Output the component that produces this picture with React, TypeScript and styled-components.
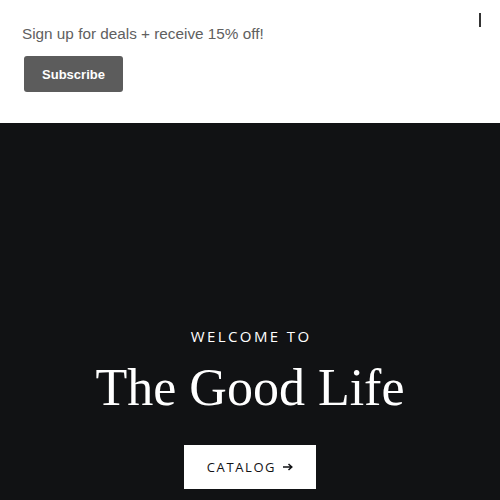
import React from "react";
import styled, { createGlobalStyle } from "styled-components";

const Global = createGlobalStyle`
  html, body { margin: 0; padding: 0; background: #111214; }
  #root { width: 500px; height: 500px; overflow: hidden; }
`;

const Page = styled.div`
  width: 500px;
  height: 500px;
  display: flex;
  flex-direction: column;
`;

const Banner = styled.div`
  position: relative;
  background: #ffffff;
  height: 123px;
  box-sizing: border-box;
  padding: 24px 22px 0;
  display: flex;
  flex-direction: column;
  align-items: flex-start;
`;

const BannerText = styled.p`
  margin: 0;
  font-family: "Liberation Sans", Arial, sans-serif;
  font-size: 15.3px;
  line-height: 20px;
  color: #606060;
`;

const SubscribeButton = styled.button`
  margin: 12px 0 0 2px;
  width: 99px;
  height: 36px;
  border: none;
  border-radius: 3px;
  background: #5c5c5c;
  color: #ffffff;
  font-family: "Liberation Sans", Arial, sans-serif;
  font-weight: 700;
  font-size: 13px;
  cursor: pointer;
`;

const CloseMark = styled.span`
  position: absolute;
  top: 13px;
  left: 479px;
  width: 2px;
  height: 14px;
  background: #333333;
`;

const Hero = styled.section`
  flex: 1;
  background: #111214;
  display: flex;
  flex-direction: column;
  align-items: center;
  justify-content: flex-end;
  padding-bottom: 11px;
`;

const Eyebrow = styled.div`
  font-family: "Open Sans", "Liberation Sans", sans-serif;
  font-size: 15px;
  font-weight: 500;
  letter-spacing: 2.4px;
  color: #ffffff;
  line-height: 20px;
  margin-right: -2.4px;
`;

const Title = styled.h1`
  margin: 12px 0 0;
  font-family: "Liberation Serif", "Times New Roman", serif;
  font-weight: 400;
  font-size: 52px;
  line-height: 60px;
  color: #ffffff;
`;

const CatalogButton = styled.a`
  margin-top: 27px;
  width: 132px;
  height: 44px;
  background: #ffffff;
  color: #111214;
  display: flex;
  align-items: center;
  justify-content: center;
  gap: 7px;
  font-family: "Open Sans", "Liberation Sans", sans-serif;
  font-size: 13px;
  font-weight: 500;
  letter-spacing: 1.6px;
  text-decoration: none;
`;

const Arrow = styled.svg`
  width: 10px;
  height: 10px;
`;

export default function App() {
  return (
    <Page>
      <Global />
      <Banner>
        <BannerText>Sign up for deals + receive 15% off!</BannerText>
        <SubscribeButton>Subscribe</SubscribeButton>
        <CloseMark />
      </Banner>
      <Hero>
        <Eyebrow>WELCOME TO</Eyebrow>
        <Title>The Good Life</Title>
        <CatalogButton href="#">
          CATALOG
          <Arrow viewBox="0 0 10 10">
            <path d="M0 5H8.5M5.5 2L8.8 5L5.5 8" stroke="#111214" strokeWidth="1.5" fill="none" />
          </Arrow>
        </CatalogButton>
      </Hero>
    </Page>
  );
}
